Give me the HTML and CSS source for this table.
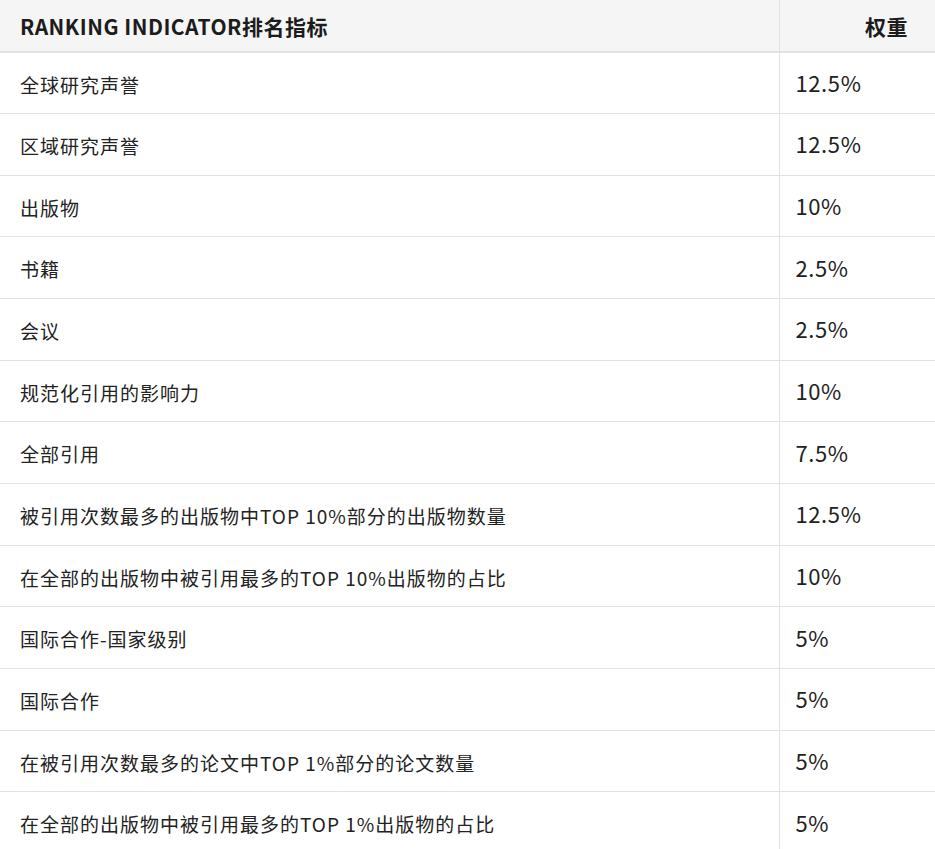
FILE: index.html
```html
<!DOCTYPE html>
<html lang="zh">
<head>
<meta charset="utf-8">
<link rel="stylesheet" href="styles.css">
</head>
<body>
<table class="rank-table">
  <thead>
    <tr><th class="col-name">RANKING INDICATOR排名指标</th><th class="col-weight">权重</th></tr>
  </thead>
  <tbody>
    <tr><td>全球研究声誉</td><td class="w">12.5%</td></tr>
    <tr><td>区域研究声誉</td><td class="w">12.5%</td></tr>
    <tr><td>出版物</td><td class="w">10%</td></tr>
    <tr><td>书籍</td><td class="w">2.5%</td></tr>
    <tr><td>会议</td><td class="w">2.5%</td></tr>
    <tr><td>规范化引用的影响力</td><td class="w">10%</td></tr>
    <tr><td>全部引用</td><td class="w">7.5%</td></tr>
    <tr><td>被引用次数最多的出版物中TOP 10%部分的出版物数量</td><td class="w">12.5%</td></tr>
    <tr><td>在全部的出版物中被引用最多的TOP 10%出版物的占比</td><td class="w">10%</td></tr>
    <tr><td>国际合作-国家级别</td><td class="w">5%</td></tr>
    <tr><td>国际合作</td><td class="w">5%</td></tr>
    <tr><td>在被引用次数最多的论文中TOP 1%部分的论文数量</td><td class="w">5%</td></tr>
    <tr><td>在全部的出版物中被引用最多的TOP 1%出版物的占比</td><td class="w">5%</td></tr>
  </tbody>
</table>
</body>
</html>
```
FILE: styles.css
```css
html, body {
  margin: 0;
  padding: 0;
  background: #fff;
}
body {
  font-family: "Noto Sans CJK SC", "Noto Sans", sans-serif;
  color: #222;
  overflow: hidden;
}
.rank-table {
  width: 935px;
  border-collapse: collapse;
  table-layout: fixed;
}
.rank-table th {
  background: #f5f5f5;
  font-weight: 700;
  font-size: 21px;
  letter-spacing: 0.5px;
  height: 52px;
  box-sizing: border-box;
  padding: 0 20px;
  border-bottom: 2px solid #e2e2e2;
  text-align: left;
  color: #1c1c1c;
}
.rank-table th.col-name { width: 779px; border-right: 1px solid #e2e2e2; }
.rank-table th.col-weight { text-align: right; padding-right: 27px; }
.rank-table td {
  font-size: 19px;
  letter-spacing: 1px;
  height: 61.67px;
  box-sizing: border-box;
  padding: 2px 20px 0;
  border-bottom: 1px solid #e2e2e2;
  vertical-align: middle;
}
.rank-table td.w {
  border-left: 1px solid #e2e2e2;
  padding: 0 16px 2px;
  font-size: 22px;
  letter-spacing: 0.6px;
}
```
